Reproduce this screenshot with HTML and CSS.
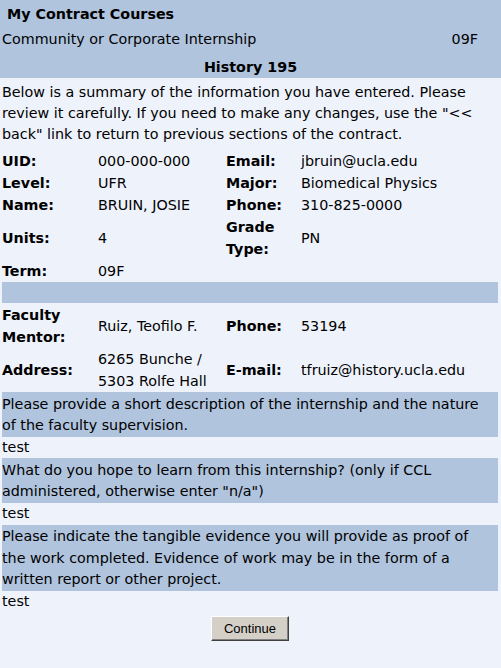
FILE: index.html
```html
<!DOCTYPE html>
<html>
<head>
<meta charset="utf-8">
<title>My Contract Courses</title>
<link rel="stylesheet" href="styles.css">
</head>
<body>
<div class="top">
  <div class="title">My Contract Courses</div>
  <div class="course"><span>Community or Corporate Internship</span><span class="term">09F</span></div>
  <div class="course-num">History 195</div>
</div>
<div class="main">
  <p class="intro">Below is a summary of the information you have entered. Please review it carefully. If you need to make any changes, use the "&lt;&lt; back" link to return to previous sections of the contract.</p>
  <div class="info student">
    <div class="lbl">UID:</div><div class="val">000-000-000</div><div class="lbl">Email:</div><div class="val">jbruin@ucla.edu</div>
    <div class="lbl">Level:</div><div class="val">UFR</div><div class="lbl">Major:</div><div class="val">Biomedical Physics</div>
    <div class="lbl">Name:</div><div class="val">BRUIN, JOSIE</div><div class="lbl">Phone:</div><div class="val">310-825-0000</div>
    <div class="lbl">Units:</div><div class="val">4</div><div class="lbl">Grade Type:</div><div class="val">PN</div>
    <div class="lbl">Term:</div><div class="val">09F</div><div></div><div></div>
  </div>
  <div class="bar"></div>
  <div class="info mentor">
    <div class="lbl">Faculty Mentor:</div><div class="val">Ruiz, Teofilo F.</div><div class="lbl">Phone:</div><div class="val">53194</div>
    <div class="lbl">Address:</div><div class="val addr">6265 Bunche / 5303 Rolfe Hall</div><div class="lbl">E-mail:</div><div class="val">tfruiz@history.ucla.edu</div>
  </div>
  <div class="q q1">Please provide a short description of the internship and the nature of the faculty supervision.</div>
  <div class="ans">test</div>
  <div class="q q2">What do you hope to learn from this internship? (only if CCL administered, otherwise enter "n/a")</div>
  <div class="ans">test</div>
  <div class="q q3">Please indicate the tangible evidence you will provide as proof of the work completed. Evidence of work may be in the form of a written report or other project.</div>
  <div class="ans">test</div>
  <div class="actions"><button class="btn" type="button">Continue</button></div>
</div>
</body>
</html>
```
FILE: styles.css
```css
html, body {
  margin: 0;
  padding: 0;
  background: #eef2fb;
  height: 100%;
}
body {
  font-family: "DejaVu Sans", Verdana, sans-serif;
  font-size: 14.3px;
  color: #000;
}
.top {
  background: #b0c4de;
  height: 78px;
}
.title {
  font-weight: bold;
  height: 26px;
  line-height: 28px;
  padding-left: 7px;
}
.course {
  display: flex;
  justify-content: space-between;
  height: 26px;
  line-height: 27px;
  padding: 0 23px 0 2px;
}
.course-num {
  font-weight: bold;
  text-align: center;
  height: 26px;
  line-height: 30px;
}
.main {
  width: 496px;
  margin-left: 2px;
}
.intro {
  margin: 0;
  padding-top: 4px;
  line-height: 21px;
}
.info {
  display: grid;
  grid-template-columns: 96px 128px 75px 1fr;
  line-height: 22px;
  align-items: center;
}
.student {
  margin-top: 5px;
}
.lbl {
  font-weight: bold;
}
.bar {
  background: #b0c4de;
  height: 21px;
}
.mentor {
  padding-top: 1px;
}
.mentor .lbl, .mentor .val {
  line-height: 22px;
}
.q {
  background: #b0c4de;
  line-height: 21px;
  padding: 2px 6px 1px 0;
}
.q3 {
  margin-top: 1px;
  line-height: 21.5px;
  padding: 1px 6px 0 0;
}
.ans {
  line-height: 21px;
}
.actions {
  text-align: center;
  padding-top: 4px;
}
.btn {
  font-family: "Liberation Sans", Arial, sans-serif;
  font-size: 13px;
  width: 78px;
  height: 25px;
  background: #d4d0c8;
  border: 1px solid;
  border-color: #fff #404040 #404040 #fff;
  box-shadow: inset -1px -1px #808080;
  padding: 0;
  color: #000;
}
```
